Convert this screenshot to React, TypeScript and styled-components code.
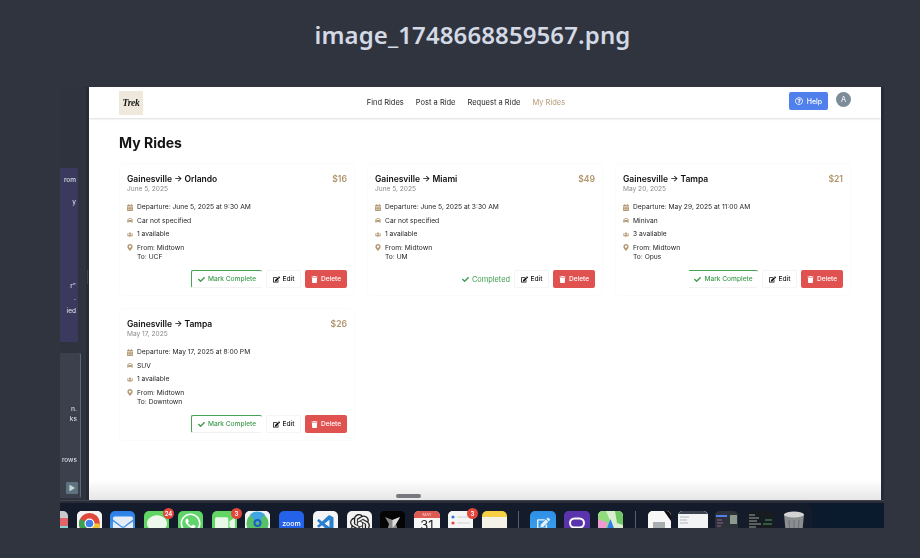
import React from "react";
import styled, { createGlobalStyle } from "styled-components";
import { FaCalendarAlt, FaCar, FaUsers, FaMapMarkerAlt, FaCheck, FaEdit, FaTrash, FaRegQuestionCircle, FaWhatsapp, FaEnvelope, FaVideo, FaComment, FaPlay } from "react-icons/fa";
import { SiOpenai } from "react-icons/si";
import { VscVscode } from "react-icons/vsc";

const Global = createGlobalStyle`
  html, body { margin: 0; padding: 0; background: #30343f; }
  * { box-sizing: border-box; }
`;

const Page = styled.div`
  width: 920px; height: 558px; overflow: hidden; background: #30343f;
  font-family: Inter, "Liberation Sans", sans-serif;
`;
const FileName = styled.h1`
  margin: 0; height: 87px; padding: 19px 0 0 25px; text-align: center;
  font: 600 24px/32px "Noto Sans", Inter, sans-serif; color: #d3d9e5;
  letter-spacing: 0.1px;
`;
const Shot = styled.div`
  margin-left: 60px; width: 824px; height: 441px; display: flex; flex-direction: column; overflow: hidden;
`;
const Desktop = styled.div`
  display: flex; height: 413px; flex: none;
`;
const LeftStrip = styled.aside`
  width: 29px; flex: none; display: flex; flex-direction: column; gap: 11px; padding-top: 81px;
  background: linear-gradient(90deg, #2f333e 0, #2f333e 26px, #272b37 26px);
  position: relative; font-size: 6.5px; font-weight: 500; color: #d9dbe6;
`;
const GripMark = styled.span`
  position: absolute; left: 27px; top: 183px; width: 1px; height: 14px; background: #3f4450;
`;
const PurplePanel = styled.div`
  width: 18px; height: 174px; background: #3b3a5e; border-radius: 0 2px 2px 0; overflow: hidden;
  display: flex; flex-direction: column; align-items: flex-end; padding-right: 2px; filter: blur(0.35px);
`;
const SlatePanel = styled.div`
  width: 21px; height: 145px; background: #3b404c; border-right: 1px solid #5a6a75; border-radius: 0 2px 2px 0;
  overflow: hidden; display: flex; flex-direction: column; align-items: flex-end; padding-right: 3px; position: relative;
  filter: blur(0.35px);
`;
const Fragment = styled.span<{ $top: number }>`
  margin-top: ${(p) => p.$top}px; line-height: 8px; white-space: nowrap;
`;
const PanelButton = styled.span`
  position: absolute; right: 2px; bottom: 4px; width: 12px; height: 12px; background: #5d7380; border-radius: 1px;
  display: flex; align-items: center; justify-content: center; color: #c9d2d8; font-size: 6px;
`;
const Main = styled.main`
  width: 792px; flex: none; position: relative; overflow: hidden; background: #fff;
`;
const Blurred = styled.div`
  filter: blur(0.42px); height: 100%;
`;
const RightStrip = styled.div`
  width: 3px; flex: none; background: #272b37;
`;
const Fade = styled.div`
  position: absolute; left: 0; right: 0; bottom: 0; height: 20px;
  background: linear-gradient(180deg, rgba(232,232,232,0), #e6e6e6);
`;
const Handle = styled.span`
  position: absolute; left: 307px; bottom: 2px; width: 25px; height: 4px; border-radius: 2px; background: #76787d;
`;
const Nav = styled.nav`
  height: 31px; display: flex; align-items: center; justify-content: space-between; padding: 0 30px;
  box-shadow: 0 1px 2px rgba(0,0,0,.14); background: #fff;
`;
const Logo = styled.div`
  width: 24px; height: 24px; background: #efe9dd; display: flex; align-items: center; justify-content: center;
  font: italic 700 9.5px "Liberation Serif", serif; color: #151515; letter-spacing: -0.3px;
`;
const NavLinks = styled.div`
  display: flex; gap: 12px; font-size: 7.5px; color: #333;
`;
const NavLink = styled.span<{ $active?: boolean }>`
  color: ${(p) => (p.$active ? "#b59a75" : "#262626")};
`;
const NavRight = styled.div`
  display: flex; gap: 8px; align-items: flex-start; padding-bottom: 3px;
`;
const HelpButton = styled.button`
  width: 39px; height: 18px; border: 0; padding: 0; border-radius: 2px; background: #4f80ec; color: #fff;
  display: flex; align-items: center; justify-content: center; gap: 4px; font: 500 7px Inter, sans-serif;
`;
const Avatar = styled.span`
  width: 15px; height: 15px; border-radius: 50%; background: #7d8c99; color: #fff; font-size: 7.5px;
  display: flex; align-items: center; justify-content: center;
`;
const Content = styled.div`
  padding: 16px 30px 0;
`;
const Heading = styled.h2`
  margin: 0 0 11px; font-size: 14px; line-height: 18px; font-weight: 700; color: #141414;
`;
const Grid = styled.div`
  display: grid; grid-template-columns: repeat(3, 236px); grid-auto-rows: 133px; gap: 12px;
`;
const Card = styled.article`
  border: 1px solid #fbfbfb; border-radius: 4px; padding: 8px 7px 7px; display: flex; flex-direction: column; background: #fff;
`;
const CardHead = styled.div`
  display: flex; justify-content: space-between; align-items: center; height: 13px;
`;
const Route = styled.span`
  font-size: 8.5px; font-weight: 600; color: #0e0e0e;
`;
const Price = styled.span`
  font-size: 8.6px; font-weight: 600; color: #b0946c;
`;
const DateLine = styled.div`
  font-size: 6.6px; line-height: 9px; color: #8a8a8a; margin-bottom: 7px;
`;
const Detail = styled.div`
  display: flex; align-items: flex-start; gap: 4px; font-size: 6.7px; line-height: 12px; color: #1e1e1e; margin-bottom: 1.5px;
  svg { color: #b59a75; width: 6px; height: 7px; flex: none; margin-top: 2.5px; }
`;
const Lines = styled.div`
  line-height: 9px; padding-top: 2.5px;
`;
const Actions = styled.div`
  margin-top: auto; display: flex; justify-content: flex-end; align-items: center; gap: 4px;
`;
const CompleteButton = styled.button<{ $edge: boolean }>`
  width: ${(p) => (p.$edge ? 71 : 70)}px; height: 18px; padding: 0; background: #fff; color: #3f9c4f;
  border: 0; border-top: 1px solid #45a254; border-left: 1px solid ${(p) => (p.$edge ? "#45a254" : "#fff")};
  border-bottom: 1px solid #f2f2f2; border-radius: 2px;
  display: flex; align-items: center; justify-content: center; gap: 3px; font: 500 6.6px Inter, sans-serif;
`;
const Completed = styled.span`
  display: flex; align-items: center; gap: 3px; color: #3f9c4f; font-size: 7.4px; margin-right: 0;
`;
const EditButton = styled.button`
  width: 35px; height: 18px; padding: 0; background: #fff; color: #111; border: 1px solid #f4f4f4; border-radius: 2px;
  display: flex; align-items: center; justify-content: center; gap: 3px; font: 500 6.6px Inter, sans-serif;
`;
const DeleteButton = styled.button`
  width: 42px; height: 18px; padding: 0; background: #e0524f; color: #fff; border: 0; border-radius: 2px;
  display: flex; align-items: center; justify-content: center; gap: 3px; font: 500 6.6px Inter, sans-serif;
`;
const Dock = styled.footer`
  height: 28px; flex: none; position: relative; overflow: hidden; filter: blur(0.3px);
  background: linear-gradient(90deg, #0d1522, #0b1b2e); border-top: 1px solid #41454f;
`;
const DockTop = styled.div`
  height: 2px; background: #2a2d38;
`;
const DockShelf = styled.div`
  width: 752px; height: 26px; background: #141b2a; border-radius: 0 8px 0 0; padding-top: 8px;
  display: flex; align-items: flex-start;
`;
const DockIcon = styled.div<{ $x: number; $w?: number; $bg: string; $ink?: string; $size?: number }>`
  position: relative; flex: none; width: ${(p) => p.$w ?? 25}px; height: 25px; margin-left: ${(p) => p.$x}px;
  background: ${(p) => p.$bg}; border-radius: 5px; color: ${(p) => p.$ink ?? "#fff"}; font-size: ${(p) => p.$size ?? 20}px;
  display: flex; align-items: center; justify-content: center;
`;
const Badge = styled.span`
  position: absolute; top: -3px; right: -5px; width: 11px; height: 11px; border-radius: 50%; background: #e2473d;
  color: #fff; font-size: 6px; font-weight: 600; display: flex; align-items: center; justify-content: center; z-index: 1;
`;
const Separator = styled.span<{ $x: number }>`
  flex: none; width: 1px; height: 18px; background: #5a5f69; margin-left: ${(p) => p.$x}px;
`;
const CalendarHead = styled.span`
  position: absolute; top: 0; left: 0; right: 0; height: 7px; background: #dc5a52; color: #f6d8d5; border-radius: 5px 5px 0 0;
  font-size: 4px; text-align: center; line-height: 7px;
`;
const CalendarDay = styled.span`
  position: absolute; top: 7px; left: 0; right: 0; text-align: center; color: #222; font-size: 13px; line-height: 14px;
`;
const ZoomWord = styled.span`
  font-size: 7px; font-weight: 500; color: #fff;
`;
const Glyph = styled.svg`
  width: 100%; height: 100%; display: block; border-radius: 5px;
`;

type Ride = { to: string; date: string; price: string; dep: string; car: string; seats: string; dest: string; done?: boolean; edge?: boolean };
const rides: Ride[] = [
  { to: "Orlando", date: "June 5, 2025", price: "$16", dep: "June 5, 2025 at 9:30 AM", car: "Car not specified", seats: "1 available", dest: "UCF", edge: true },
  { to: "Miami", date: "June 5, 2025", price: "$49", dep: "June 5, 2025 at 3:30 AM", car: "Car not specified", seats: "1 available", dest: "UM", done: true },
  { to: "Tampa", date: "May 20, 2025", price: "$21", dep: "May 29, 2025 at 11:00 AM", car: "Minivan", seats: "3 available", dest: "Opus" },
  { to: "Tampa", date: "May 17, 2025", price: "$26", dep: "May 17, 2025 at 8:00 PM", car: "SUV", seats: "1 available", dest: "Downtown", edge: true },
];

function RideCard({ ride }: { ride: Ride }) {
  return (
    <Card>
      <CardHead>
        <Route>Gainesville → {ride.to}</Route>
        <Price>{ride.price}</Price>
      </CardHead>
      <DateLine>{ride.date}</DateLine>
      <Detail><FaCalendarAlt />Departure: {ride.dep}</Detail>
      <Detail><FaCar />{ride.car}</Detail>
      <Detail><FaUsers />{ride.seats}</Detail>
      <Detail>
        <FaMapMarkerAlt />
        <Lines>From: Midtown<br />To: {ride.dest}</Lines>
      </Detail>
      <Actions>
        {ride.done ? (
          <Completed><FaCheck size={7} />Completed</Completed>
        ) : (
          <CompleteButton $edge={!!ride.edge}><FaCheck size={7} />Mark Complete</CompleteButton>
        )}
        <EditButton><FaEdit size={7} />Edit</EditButton>
        <DeleteButton><FaTrash size={7} />Delete</DeleteButton>
      </Actions>
    </Card>
  );
}

export default function App() {
  return (
    <Page>
      <Global />
      <FileName>image_1748668859567.png</FileName>
      <Shot>
        <Desktop>
          <LeftStrip>
            <GripMark />
            <PurplePanel>
              <Fragment $top={8}>rom</Fragment>
              <Fragment $top={14}>y</Fragment>
              <Fragment $top={76}>r"</Fragment>
              <Fragment $top={4}>.</Fragment>
              <Fragment $top={5}>ied</Fragment>
            </PurplePanel>
            <SlatePanel>
              <Fragment $top={52}>n.</Fragment>
              <Fragment $top={2}>ks</Fragment>
              <Fragment $top={33}>rows</Fragment>
              <PanelButton><FaPlay /></PanelButton>
            </SlatePanel>
          </LeftStrip>
          <Main>
            <Blurred>
              <Nav>
                <Logo>Trek</Logo>
                <NavLinks>
                  <NavLink>Find Rides</NavLink>
                  <NavLink>Post a Ride</NavLink>
                  <NavLink>Request a Ride</NavLink>
                  <NavLink $active>My Rides</NavLink>
                </NavLinks>
                <NavRight>
                  <HelpButton><FaRegQuestionCircle size={8} />Help</HelpButton>
                  <Avatar>A</Avatar>
                </NavRight>
              </Nav>
              <Content>
                <Heading>My Rides</Heading>
                <Grid>
                  {rides.map((r, i) => <RideCard key={i} ride={r} />)}
                </Grid>
              </Content>
            </Blurred>
            <Fade />
            <Handle />
          </Main>
          <RightStrip />
        </Desktop>
        <Dock>
          <DockTop />
          <DockShelf>
            <DockIcon $x={-17} $bg="linear-gradient(180deg,#c9c9c9 0 30%,#e2646b 30% 60%,#86d6d6 60%)" />
            <DockIcon $x={9} $bg="#f4f4f4">
              <Glyph viewBox="0 0 25 25">
                <rect width="25" height="25" fill="#f4f4f4" />
                <circle cx="12.5" cy="12.5" r="10.5" fill="#e0483c" />
                <path d="M12.5 12.5 23 12.5A10.5 10.5 0 0 1 7 21.5Z" fill="#f2c230" />
                <path d="M12.5 12.5 7 21.5A10.5 10.5 0 0 1 3 8Z" fill="#3d9f50" />
                <circle cx="12.5" cy="12.5" r="5" fill="#fff" />
                <circle cx="12.5" cy="12.5" r="3.8" fill="#3f7fe8" />
              </Glyph>
            </DockIcon>
            <DockIcon $x={8} $bg="linear-gradient(180deg,#2b7de8,#4fa4f0)" $ink="#e6ecf5"><FaEnvelope /></DockIcon>
            <DockIcon $x={9} $bg="#62d664" $ink="#edf8ec"><FaComment /><Badge>24</Badge></DockIcon>
            <DockIcon $x={9} $bg="#5fd468" $size={23}><FaWhatsapp /></DockIcon>
            <DockIcon $x={9} $bg="#62d664" $ink="#e9f7e8"><FaVideo /><Badge>3</Badge></DockIcon>
            <DockIcon $x={8} $bg="#f3f3f3">
              <Glyph viewBox="0 0 25 25">
                <rect width="25" height="25" fill="#f3f3f3" />
                <circle cx="12.5" cy="12.5" r="11" fill="#58c168" />
                <path d="M12.5 12.5 5 3.5A11 11 0 0 1 20 3.5Z" fill="#3fa6e2" />
                <circle cx="12.5" cy="12" r="3" fill="none" stroke="#1f5fc4" strokeWidth="2" />
              </Glyph>
            </DockIcon>
            <DockIcon $x={9} $bg="#2462ea"><ZoomWord>zoom</ZoomWord></DockIcon>
            <DockIcon $x={9} $bg="#f5f5f5" $ink="#2b7fd0"><VscVscode /></DockIcon>
            <DockIcon $x={9} $bg="#f3f3f3" $ink="#222"><SiOpenai /></DockIcon>
            <DockIcon $x={8} $bg="#050505">
              <Glyph viewBox="0 0 25 25">
                <rect width="25" height="25" fill="#050505" />
                <path d="M5 6 12.5 9 20 6 16 13 18 20 12.5 17 7 20 9 13Z" fill="#8a8a8a" />
                <path d="M12.5 9 20 6 16 13 12.5 17Z" fill="#dcdcdc" />
              </Glyph>
            </DockIcon>
            <DockIcon $x={9} $w={26} $bg="#f7f7f7"><CalendarHead>MAY</CalendarHead><CalendarDay>31</CalendarDay></DockIcon>
            <DockIcon $x={8} $bg="#f5f5f5">
              <Glyph viewBox="0 0 25 25">
                <rect width="25" height="25" fill="#f5f5f5" />
                <circle cx="5" cy="6" r="1.6" fill="#3b78e0" />
                <circle cx="5" cy="12" r="1.6" fill="#e0483c" />
                <path d="M9 6h13M9 12h13" stroke="#cfcfcf" strokeWidth="1" />
              </Glyph>
              <Badge>3</Badge>
            </DockIcon>
            <DockIcon $x={9} $bg="linear-gradient(180deg,#f7cf45 0 26%,#f4f2e8 26%)" />
            <Separator $x={11} />
            <DockIcon $x={11} $w={26} $bg="linear-gradient(180deg,#2f8fe6,#3ba5ee)" $ink="#e9eef3" $size={13}><FaEdit /></DockIcon>
            <DockIcon $x={8} $w={26} $bg="#5a34ad">
              <Glyph viewBox="0 0 26 25">
                <rect width="26" height="25" fill="#5a34ad" />
                <rect x="6" y="7.5" width="14" height="9" rx="4.5" fill="none" stroke="#fff" strokeWidth="2" />
              </Glyph>
            </DockIcon>
            <DockIcon $x={8} $bg="#eef0ea">
              <Glyph viewBox="0 0 25 25">
                <rect width="25" height="25" fill="#d9efd0" />
                <path d="M0 0H8L13 12 3 25H0Z" fill="#8fdc7c" />
                <path d="M0 8 10 12 4 25H0Z" fill="#ef9ad0" />
                <path d="M17 0H25V14L19 12Z" fill="#6fc764" />
                <path d="M12.5 8 17 20H8Z" fill="#2f7fe8" />
              </Glyph>
            </DockIcon>
            <Separator $x={12} />
            <DockIcon $x={12} $w={23} $bg="#fff">
              <Glyph viewBox="0 0 23 25">
                <rect width="23" height="25" fill="#f7f7f7" />
                <path d="M16 0H23V10Z" fill="#0c0c0c" />
                <rect x="5" y="11" width="12" height="8" fill="#a8aeb0" />
              </Glyph>
            </DockIcon>
            <DockIcon $x={7} $w={30} $bg="#eef0f3">
              <Glyph viewBox="0 0 30 25">
                <rect width="30" height="25" fill="#f2f3f5" />
                <rect width="30" height="3" fill="#3c4350" />
                <path d="M2 6h9M2 9h7M2 12h8" stroke="#9aa0a8" strokeWidth=".7" />
              </Glyph>
            </DockIcon>
            <DockIcon $x={7} $w={23} $bg="#2d3139">
              <Glyph viewBox="0 0 23 25">
                <rect width="23" height="25" fill="#2d3139" />
                <rect x="1" y="4" width="11" height="2" fill="#4f80ec" />
                <rect x="15" y="4" width="7" height="9" fill="#8b9a8c" />
                <path d="M2 9h5M2 12h6M2 15h4" stroke="#a86ea0" strokeWidth=".8" />
              </Glyph>
            </DockIcon>
            <DockIcon $x={9} $w={27} $bg="#171c20">
              <Glyph viewBox="0 0 27 25">
                <rect width="27" height="25" fill="#171c20" />
                <path d="M2 4h6M2 7h10M2 10h8M2 13h12M2 16h7" stroke="#d5dcd8" strokeWidth=".7" />
                <path d="M18 9h7M16 13h9" stroke="#4e9a64" strokeWidth="1.2" />
              </Glyph>
            </DockIcon>
            <DockIcon $x={9} $w={22} $bg="transparent">
              <Glyph viewBox="0 0 22 25">
                <path d="M1 3H21L19 25H3Z" fill="#8b8e90" />
                <ellipse cx="11" cy="3.5" rx="10" ry="3" fill="#d4d4d4" />
                <path d="M6 9 7 25M11 9V25M16 9 15 25" stroke="#6b6e70" strokeWidth="1" />
              </Glyph>
            </DockIcon>
          </DockShelf>
        </Dock>
      </Shot>
    </Page>
  );
}
